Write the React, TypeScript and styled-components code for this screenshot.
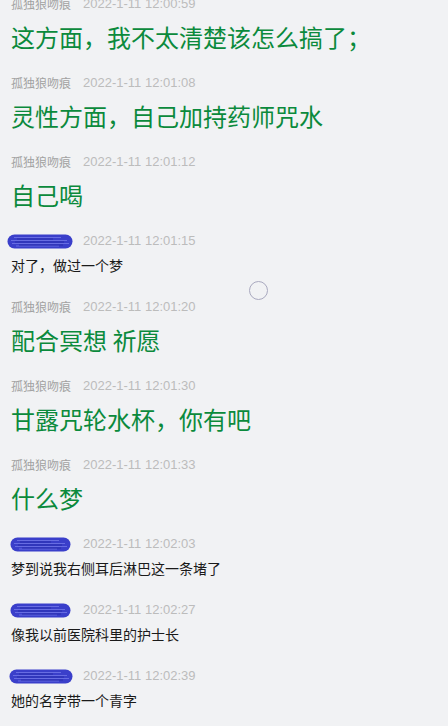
import React from 'react';
import styled, { createGlobalStyle } from 'styled-components';

const GlobalStyle = createGlobalStyle`
  html, body {
    margin: 0;
    padding: 0;
    background: #f1f2f4;
  }
  body {
    font-family: "Liberation Sans", "Noto Sans CJK SC", sans-serif;
    overflow: hidden;
  }
`;

type Msg = {
  name?: string;
  time: string;
  text: string;
  big: boolean;
  scribble?: number;
};

const messages: Msg[] = [
  { name: '孤独狼吻痕', time: '2022-1-11 12:00:59', text: '这方面，我不太清楚该怎么搞了；', big: true },
  { name: '孤独狼吻痕', time: '2022-1-11 12:01:08', text: '灵性方面，自己加持药师咒水', big: true },
  { name: '孤独狼吻痕', time: '2022-1-11 12:01:12', text: '自己喝', big: true },
  { time: '2022-1-11 12:01:15', text: '对了，做过一个梦', big: false, scribble: 0 },
  { name: '孤独狼吻痕', time: '2022-1-11 12:01:20', text: '配合冥想 祈愿', big: true },
  { name: '孤独狼吻痕', time: '2022-1-11 12:01:30', text: '甘露咒轮水杯，你有吧', big: true },
  { name: '孤独狼吻痕', time: '2022-1-11 12:01:33', text: '什么梦', big: true },
  { time: '2022-1-11 12:02:03', text: '梦到说我右侧耳后淋巴这一条堵了', big: false, scribble: 1 },
  { time: '2022-1-11 12:02:27', text: '像我以前医院科里的护士长', big: false, scribble: 1 },
  { time: '2022-1-11 12:02:39', text: '她的名字带一个青字', big: false, scribble: 2 },
];

const Page = styled.div`
  position: relative;
  width: 448px;
  height: 726px;
  overflow: hidden;
`;

const List = styled.div`
  display: flex;
  flex-direction: column;
  margin-top: -4px;
  padding: 0 11px;
`;

const Item = styled.div<{ $big: boolean }>`
  display: flex;
  flex-direction: column;
  padding-bottom: ${(p) => (p.$big ? '22px' : '24px')};
`;

const Header = styled.div`
  display: flex;
  align-items: center;
  height: 16px;
  gap: 12px;
`;

const Name = styled.span`
  font-size: 12px;
  line-height: 16px;
  color: #a2a2a2;
  font-family: "Noto Sans CJK SC", sans-serif;
`;

const Time = styled.span`
  font-size: 13px;
  line-height: 16px;
  color: #bcbcbc;
`;

const Body = styled.div<{ $big: boolean }>`
  margin-top: ${(p) => (p.$big ? '9px' : '7px')};
  font-family: "Noto Sans CJK SC", sans-serif;
  font-size: ${(p) => (p.$big ? '24px' : '14px')};
  line-height: ${(p) => (p.$big ? '32px' : '19px')};
  color: ${(p) => (p.$big ? '#0b8a3c' : '#1a1a1a')};
  white-space: nowrap;
`;

const ScribbleWrap = styled.span<{ $left: number; $right: number }>`
  display: inline-flex;
  margin-left: ${(p) => p.$left}px;
  margin-right: ${(p) => p.$right}px;
`;

const Spinner = styled.div`
  position: absolute;
  left: 249px;
  top: 281px;
  width: 17px;
  height: 17px;
  border: 1.5px solid #a9a9bf;
  border-radius: 50%;
`;

const shapes = [
  { w: 66, left: -4, right: -2 },
  { w: 61, left: -1, right: 0 },
  { w: 64, left: -2, right: -2 },
];

function Scribble({ kind }: { kind: number }) {
  const s = shapes[kind];
  return (
    <ScribbleWrap $left={s.left} $right={s.right}>
      <svg width={s.w} height={15} viewBox={`0 0 ${s.w} 15`}>
        <rect x={0.5} y={0.5} width={s.w - 1} height={14} rx={7} fill="#3a3fca" />
        <path
          d={`M7 3.5 H${s.w - 12} M4 6.5 H${s.w - 6} M5 9.5 H${s.w - 4} M9 12 H${s.w - 14}`}
          stroke="#6c72e4"
          strokeWidth={0.9}
          fill="none"
        />
        <path
          d={`M10 5 H${s.w - 20} M8 8 H${s.w - 9} M12 11 H${s.w - 10}`}
          stroke="#272ca8"
          strokeWidth={0.9}
          fill="none"
        />
      </svg>
    </ScribbleWrap>
  );
}

export default function App() {
  return (
    <Page>
      <GlobalStyle />
      <List>
        {messages.map((m, i) => (
          <Item key={i} $big={m.big}>
            <Header>
              {m.scribble !== undefined ? <Scribble kind={m.scribble} /> : <Name>{m.name}</Name>}
              <Time>{m.time}</Time>
            </Header>
            <Body $big={m.big}>{m.text}</Body>
          </Item>
        ))}
      </List>
      <Spinner />
    </Page>
  );
}
